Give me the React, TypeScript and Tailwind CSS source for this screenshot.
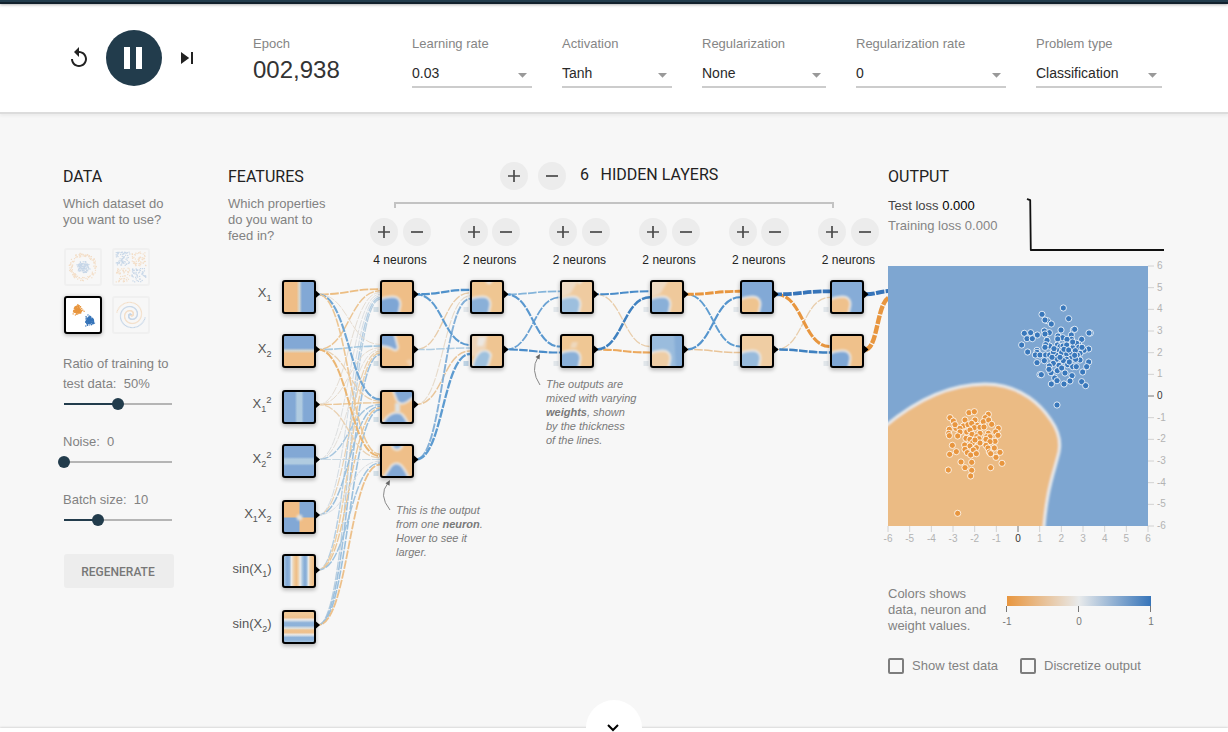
import React from "react";

const ORANGE = "#efbd86";
const BLUE = "#82a8d5";
const sans = "font-['Liberation_Sans',Arial,sans-serif]";

/* ---------- header ---------- */

const selects = [
  { label: "Learning rate", value: "0.03", cls: "w-[120px]" },
  { label: "Activation", value: "Tanh", cls: "w-[110px]" },
  { label: "Regularization", value: "None", cls: "w-[124px]" },
  { label: "Regularization rate", value: "0", cls: "w-[150px]" },
  { label: "Problem type", value: "Classification", cls: "w-[126px]" },
];

function Header() {
  return (
    <header className="relative z-10 h-[114px] border-b-2 border-[#dcdcdc] bg-white shadow-[0_2px_3px_rgba(0,0,0,0.05)]">
      <div className="h-1 border-b-2 border-[#12212d] bg-[#223c4c] shadow-[0_1px_3px_rgba(0,0,0,0.3)]" />
      <div className="flex pt-[25px]">
        <div className="ml-[67px] flex w-[186px] items-center pb-[2px]">
          <button className="flex size-6 items-center justify-center">
            <svg width="24" height="24" viewBox="0 0 24 24" fill="#222">
              <path d="M12 5V1L7 6l5 5V7c3.31 0 6 2.69 6 6s-2.69 6-6 6-6-2.69-6-6H4c0 4.42 3.58 8 8 8s8-3.58 8-8-3.58-8-8-8z" />
            </svg>
          </button>
          <button className="ml-[15px] flex size-14 items-center justify-center rounded-full bg-[#223c4c]">
            <svg width="36" height="36" viewBox="0 0 36 36" fill="#fff">
              <path d="M8 7h6v22H8zM20 7h6v22h-6z" />
            </svg>
          </button>
          <button className="ml-[14px] flex size-6 items-center justify-center">
            <svg width="24" height="24" viewBox="0 0 24 24" fill="#222">
              <path d="M5 6v12l8.2-6zM15 6v12h2V6z" />
            </svg>
          </button>
        </div>
        <div className="w-[159px]">
          <div className="mt-[6px] h-[18px] text-[13px] leading-[18px] text-[#858585]">Epoch</div>
          <div className="mt-[3px] text-[24px] leading-[28px] text-[#333]">002,938</div>
        </div>
        <div className="flex gap-[30px]">
          {selects.map((s) => (
            <div key={s.label} className={s.cls}>
              <div className="mt-[6px] h-[18px] whitespace-nowrap text-[13px] leading-[18px] text-[#858585]">{s.label}</div>
              <div className="mt-[8px] flex h-[27px] items-center justify-between border-b-2 border-[#ccc] pb-[1px] pr-[5px]">
                <span className="text-[14px] leading-[20px] text-[#2a2a2a]">{s.value}</span>
                <svg width="9" height="5" viewBox="0 0 9 5" className="mt-[4px]" fill="#999">
                  <path d="M0 0h9L4.5 4.8z" />
                </svg>
              </div>
            </div>
          ))}
        </div>
      </div>
    </header>
  );
}

/* ---------- data column ---------- */

function rng(seed: number) {
  let s = seed;
  return () => {
    s = (s * 16807) % 2147483647;
    return s / 2147483647;
  };
}

type Dot = [number, number, boolean];

function circleDots(): Dot[] {
  const r = rng(71);
  const out: Dot[] = [];
  for (let i = 0; i < 110; i++) {
    const a = r() * 6.283;
    const d = (r() + r()) * 3.8;
    out.push([17 + Math.cos(a) * d, 17 + Math.sin(a) * d, true]);
  }
  for (let i = 0; i < 120; i++) {
    const a = r() * 6.283;
    const d = 10.5 + r() * 3.6;
    out.push([17 + Math.cos(a) * d, 17 + Math.sin(a) * d, false]);
  }
  return out;
}

function xorDots(): Dot[] {
  const r = rng(913);
  const out: Dot[] = [];
  for (let i = 0; i < 270; i++) {
    const x = 2 + r() * 30;
    const y = 2 + r() * 30;
    if (Math.abs(x - 17) < 1 || Math.abs(y - 17) < 1) continue;
    out.push([x, y, x < 17 === y < 17]);
  }
  return out;
}

function gaussDots(): Dot[] {
  const r = rng(377);
  const out: Dot[] = [];
  for (let i = 0; i < 150; i++) {
    const a = r() * 6.283;
    const d = r() * 4.4 + (i % 10 === 0 ? 2.2 : 0);
    out.push([12 + Math.cos(a) * d, 12 + Math.sin(a) * d, false]);
    out.push([23.5 + Math.cos(a + 2) * d, 23 + Math.sin(a + 2) * d, true]);
  }
  return out;
}

function spiralDots(): Dot[] {
  const out: Dot[] = [];
  for (let i = 0; i < 100; i++) {
    const d = (i / 100) * 14.5;
    const a = (i / 100) * 10.9;
    out.push([17 + Math.sin(a) * d, 17 + Math.cos(a) * d, false]);
    out.push([17 - Math.sin(a) * d, 17 - Math.cos(a) * d, true]);
  }
  return out;
}

const datasets = [
  { id: "circle", dots: circleDots(), on: false },
  { id: "xor", dots: xorDots(), on: false },
  { id: "gauss", dots: gaussDots(), on: true },
  { id: "spiral", dots: spiralDots(), on: false },
];

function Slider({ track, knob }: { track: string; knob: string }) {
  return (
    <div className="relative ml-px flex h-3 w-[108px] items-center bg-transparent">
      <div className="h-[2px] w-full bg-[#b5b5b5]">
        <div className={`h-full bg-[#223c4c] ${track}`} />
      </div>
      <div className={`absolute top-0 size-3 rounded-full bg-[#223c4c] ${knob}`} />
    </div>
  );
}

function DataColumn() {
  return (
    <section className="w-[165px] pt-[53px]">
      <Title>DATA</Title>
      <p className="mt-[9px] text-[13px] leading-4 text-[#828282]">
        Which dataset do
        <br />
        you want to use?
      </p>
      <div className="ml-px mt-[20px] grid w-[86px] grid-cols-2 gap-[10px]">
        {datasets.map((d) => (
          <div
            key={d.id}
            className={
              d.on
                ? "size-[38px] rounded-[3px] border-2 border-black bg-white shadow-[0_1px_4px_rgba(0,0,0,0.3)]"
                : "size-[38px] rounded-[3px] border-2 border-[#f0f0f0]"
            }
          >
            <svg width="34" height="34" viewBox="0 0 34 34" opacity={d.on ? 1 : 0.25}>
              {d.dots.map(([x, y, b], i) => (
                <rect key={i} x={x - 0.6} y={y - 0.6} width="1.2" height="1.2" fill={b ? "#3674b9" : "#e8963f"} />
              ))}
            </svg>
          </div>
        ))}
      </div>
      <p className="mt-[20px] text-[13px] leading-5 text-[#828282]">
        Ratio of training to
        <br />
        test data:&nbsp; 50%
      </p>
      <div className="mt-[4px]">
        <Slider track="w-1/2" knob="left-[48px]" />
      </div>
      <p className="mt-[22px] text-[13px] leading-5 text-[#828282]">Noise:&nbsp; 0</p>
      <div className="mt-[4px]">
        <Slider track="w-0" knob="-left-[6px]" />
      </div>
      <p className="mt-[22px] text-[13px] leading-5 text-[#828282]">Batch size:&nbsp; 10</p>
      <div className="mt-[4px]">
        <Slider track="w-[34px]" knob="left-[28px]" />
      </div>
      <button className="ml-px mt-[28px] h-[34px] w-[110px] rounded-[3px] bg-[#ededed] pr-[2px] pt-[2px] font-['Roboto',sans-serif] text-[12px] font-medium text-[#777]">
        REGENERATE
      </button>
    </section>
  );
}

function Title({ children }: { children: React.ReactNode }) {
  return <h4 className="h-5 font-['Roboto',sans-serif] text-[16px] leading-5 text-[#222]">{children}</h4>;
}

/* ---------- network ---------- */

function RoundButton({ minus }: { minus?: boolean }) {
  return (
    <button className="flex size-7 items-center justify-center rounded-full bg-[#ececec]">
      <svg width="12" height="12" viewBox="0 0 12 12" stroke="#4a4a4a" strokeWidth="1.7">
        <path d={minus ? "M0 6h12" : "M0 6h12M6 0v12"} />
      </svg>
    </button>
  );
}

const layerCounts = [4, 2, 2, 2, 2, 2];
const rowY = [10, 64, 120, 174, 230, 284, 340];
const portY = [24.3, 79.5, 134.5, 189.5, 245, 300, 355];
const colX = [54, 152, 242, 332, 422, 512, 602];

type Link = [number, number, number, number, string];
// layer, source row, target row, stroke width, colour
const links: Link[] = [
  [0, 6, 0, 1.3, "#b9cfe0"], [0, 5, 0, 1.4, "#b4cee3"], [0, 4, 0, 1, "#d3dce4"], [0, 3, 0, 1, "#dddfe0"],
  [0, 2, 0, 1, "#e4ddd4"], [0, 1, 0, 1.5, "#ecc594"], [0, 0, 0, 1.8, "#ecbd82"],
  [0, 0, 1, 1, "#e7dccf"], [0, 1, 1, 1.6, "#a5c8e0"], [0, 2, 1, 1, "#e6dacb"], [0, 3, 1, 1, "#e3dfda"],
  [0, 4, 1, 1.2, "#ead2b3"], [0, 5, 1, 1.4, "#edcfa5"], [0, 6, 1, 1.6, "#9fc1de"],
  [0, 1, 2, 1.2, "#e9cfae"], [0, 2, 2, 1.4, "#ecc899"], [0, 3, 2, 1.4, "#a6c6df"], [0, 4, 2, 1.5, "#9bc0dd"],
  [0, 5, 2, 1.4, "#ecc899"], [0, 6, 2, 1.6, "#9bc0dd"], [0, 0, 2, 2.1, "#70a6d4"],
  [0, 2, 3, 1.3, "#ead2b3"], [0, 3, 3, 1.2, "#c8d8e3"], [0, 4, 3, 1, "#dcdfe2"], [0, 5, 3, 1.5, "#a0c3de"],
  [0, 6, 3, 1.8, "#edc08a"], [0, 0, 3, 1.6, "#edc795"], [0, 1, 3, 2, "#ebb673"],
  [1, 2, 0, 1.1, "#e7dbcb"], [1, 1, 0, 1.3, "#e8ccaa"], [1, 1, 1, 1.5, "#b0cde2"], [1, 2, 1, 1.5, "#e9c69b"],
  [1, 3, 0, 1.9, "#84b0d8"], [1, 3, 1, 2.3, "#5d9bd0"], [1, 0, 1, 2.1, "#5d9bd0"], [1, 0, 0, 2.3, "#4f91cb"],
  [2, 0, 0, 1.7, "#84b4da"], [2, 1, 0, 1.8, "#6ba2d3"], [2, 0, 1, 2.1, "#5a98cf"], [2, 1, 1, 2.2, "#4a8cc9"],
  [3, 0, 1, 1.3, "#e9ceac"], [3, 1, 1, 2.1, "#eca85c"], [3, 0, 0, 2.1, "#4a8cc9"], [3, 1, 0, 2.5, "#3f81c0"],
  [4, 1, 1, 1.5, "#e9c498"], [4, 0, 1, 1.9, "#5f9dd1"], [4, 1, 0, 2.1, "#5594cd"], [4, 0, 0, 2.9, "#e8963f"],
  [5, 1, 0, 1.3, "#e9ceac"], [5, 1, 1, 2.6, "#3f81c0"], [5, 0, 1, 3.1, "#e8963f"], [5, 0, 0, 3.7, "#3674b9"],
];

function linkPath([layer, from, to]: Link) {
  const n = layer === 0 ? 7 : layerCounts[layer - 1];
  const x1 = colX[layer] + 36;
  const x2 = colX[layer + 1];
  const y2 = portY[to] + ((from - (n - 1) / 2) / n) * 12;
  const m = (x1 + x2) / 2;
  return `M${x1} ${portY[from]}C${m} ${portY[from]} ${m} ${y2} ${x2} ${y2}`;
}

type Shape = { d: string; fill: string; halo?: boolean };
const BLOB = "M-4 18Q3 14.8 10 14.6C17 14.6 19.5 19 18 25L16 35H-4Z";

const hidden: { c: number; r: number; bg: string; shapes: Shape[] }[] = [
  { c: 1, r: 0, bg: "#efbe87", shapes: [{ d: BLOB, fill: "#7ea6d5", halo: true }] },
  { c: 1, r: 1, bg: "#efbf89", shapes: [{ d: "M-4 -4H12L16 11Q16 15 12 14Q6 10 -4 10Z", fill: BLUE, halo: true }, { d: "M24 25l4 -2 6 6 -4 5z", fill: "#f0cfab" }] },
  { c: 1, r: 2, bg: "#efbf89", shapes: [{ d: "M10 -4L15 9Q18 14 25 10L35 3V-4Z", fill: BLUE, halo: true }, { d: "M-2 34L5 25Q13 18 20 22Q24 26 28 35Z", fill: BLUE, halo: true }, { d: "M13 11h5v9h-5z", fill: "#dfe2e2" }] },
  { c: 1, r: 3, bg: "#efbf89", shapes: [{ d: "M9 -4Q10 4 15 4Q20 4 21 -4Z", fill: "#8fb2d8", halo: true }, { d: "M-1 35Q6 25 9 20Q14 15 19 19Q24 24 28 35Z", fill: BLUE, halo: true }] },
  { c: 2, r: 0, bg: "#efc692", shapes: [{ d: BLOB, fill: "#8ab0d8", halo: true }, { d: "M12 -4Q17 9 22 -4Z", fill: "#ece4da" }] },
  { c: 2, r: 1, bg: "#efc592", shapes: [{ d: "M-4 -4H16L14 12L4 20H-4Z", fill: "#eed5b9" }, { d: "M6 1h8l-3 9h-6z", fill: "#ece7e1" }, { d: "M0 35Q1 22 8 16Q16 12 19 19L17 27Q14 35 11 35Z", fill: "#9fc1de", halo: true }] },
  { c: 3, r: 0, bg: "#efcba0", shapes: [{ d: "M-4 -4H18L8 12L-4 16Z", fill: "#eedbc6" }, { d: BLOB, fill: "#9dbfde", halo: true }, { d: "M14 -4Q17 8 22 -4Z", fill: "#ece4da" }] },
  { c: 3, r: 1, bg: "#efc794", shapes: [{ d: BLOB, fill: "#8ab0d8", halo: true }, { d: "M10 6l6 0 -2 6 -6 0z", fill: "#eed8bd" }] },
  { c: 4, r: 0, bg: "#efc99b", shapes: [{ d: "M-4 -4H18L8 12L-4 16Z", fill: "#eedac3" }, { d: BLOB, fill: "#8ab0d8", halo: true }] },
  { c: 4, r: 1, bg: "#9abcdd", shapes: [{ d: "M22 -4H35V35H24Z", fill: "#86add7" }, { d: BLOB, fill: "#eecda5", halo: true }] },
  { c: 5, r: 0, bg: "#82a9d6", shapes: [{ d: BLOB, fill: "#efc48f", halo: true }] },
  { c: 5, r: 1, bg: "#efcda3", shapes: [{ d: BLOB, fill: "#98bbdc", halo: true }] },
  { c: 6, r: 0, bg: "#86acd7", shapes: [{ d: BLOB, fill: "#efc18c", halo: true }] },
  { c: 6, r: 1, bg: "#efc18b", shapes: [{ d: BLOB, fill: "#7fa7d5", halo: true }] },
];

function Frame({ x, y, children }: { x: number; y: number; children: React.ReactNode }) {
  return (
    <g transform={`translate(${x + 2} ${y + 2})`}>
      <rect x="-2" y="-1" width="34" height="35" rx="3" fill="#000" opacity="0.28" filter="url(#shade)" />
      <g clipPath="url(#cell)">{children}</g>
      <rect x="-1" y="-1" width="32" height="32" rx="2" fill="none" stroke="#000" strokeWidth="2" />
    </g>
  );
}

const band = (stops: [number, string][]) => stops.map(([o, c]) => <stop key={o} offset={o} stopColor={c} />);
const P = "#e8eaeb";
const X1_STOPS: [number, string][] = [[0, ORANGE], [0.42, ORANGE], [0.51, "#d8d8cf"], [0.6, BLUE], [1, BLUE]];
const SQ_STOPS: [number, string][] = [[0, BLUE], [0.36, BLUE], [0.44, "#b0cbe0"], [0.58, "#b0cbe0"], [0.66, BLUE], [1, BLUE]];
const SIN_STOPS: [number, string][] = [
  [0, "#a4c3de"], [0.1, BLUE], [0.18, "#8eb2d9"], [0.25, P], [0.33, "#efcfa5"], [0.41, ORANGE], [0.47, "#efcfa5"],
  [0.54, P], [0.63, "#9dbfde"], [0.7, BLUE], [0.76, "#9dbfde"], [0.81, P], [0.87, "#efcfa5"], [1, ORANGE],
];
const SIN_V: [number, string][] = [
  [0, "#efc896"], [0.08, "#efc896"], [0.18, "#efc08c"], [0.26, P], [0.36, "#8eb2d9"], [0.45, "#8eb2d9"], [0.54, "#dfe2e0"],
  [0.6, "#efc390"], [0.68, "#efc08c"], [0.76, P], [0.85, "#8eb2d9"], [0.92, "#8eb2d9"], [1, "#a4c3de"],
];

const featureFills = ["url(#gx)", "url(#gy)", "url(#gx2)", "url(#gy2)", "xy", "url(#sx)", "url(#sy)"];

function FeatureLabel({ i }: { i: number }) {
  const y = portY[i] + 3;
  const sub = (n: string) => (
    <tspan dy="4" fontSize="9">
      {n}
    </tspan>
  );
  const common = { x: 43.5, y, textAnchor: "end" as const, fontSize: 13, fill: "#555" };
  if (i < 2)
    return (
      <text {...common}>
        X{sub(String(i + 1))}
      </text>
    );
  if (i < 4)
    return (
      <text {...common}>
        X{sub(String(i - 1))}
        <tspan dy="-9" fontSize="9.5">2</tspan>
      </text>
    );
  if (i === 4)
    return (
      <text {...common}>
        X{sub("1")}
        <tspan dy="-4">X</tspan>
        {sub("2")}
      </text>
    );
  return (
    <text {...common}>
      sin(X{sub(String(i - 4))}
      <tspan dy="-4">)</tspan>
    </text>
  );
}

function Network() {
  return (
    <svg width="660" height="390" viewBox="0 0 660 390" className={`block ${sans}`}>
      <defs>
        <clipPath id="cell"><rect width="30" height="30" /></clipPath>
        <filter id="soft" x="-30%" y="-30%" width="160%" height="160%"><feGaussianBlur stdDeviation="1.2" /></filter>
        <filter id="shade" x="-30%" y="-30%" width="160%" height="160%"><feGaussianBlur stdDeviation="2" /></filter>
        <linearGradient id="gx">{band(X1_STOPS)}</linearGradient>
        <linearGradient id="gy" x1="0" x2="0" y1="1" y2="0">{band(X1_STOPS)}</linearGradient>
        <linearGradient id="gx2">{band(SQ_STOPS)}</linearGradient>
        <linearGradient id="gy2" x1="0" x2="0" y1="0" y2="1">{band(SQ_STOPS)}</linearGradient>
        <linearGradient id="sx">{band(SIN_STOPS)}</linearGradient>
        <linearGradient id="sy" x1="0" x2="0" y1="0" y2="1">{band(SIN_V)}</linearGradient>
      </defs>
      <g fill="none" strokeDasharray="8.7 1.3">
        {links.map((l, i) => (
          <path key={i} d={linkPath(l)} stroke={l[4]} strokeWidth={l[3]} strokeDashoffset={(i * 3) % 10} />
        ))}
        <path d="M638 24.3C650 24 650 21 664 21" stroke="#3674b9" strokeWidth="4" />
        <path d="M637 79.5C651 79.5 648 27.5 664 26.5" stroke="#e8963f" strokeWidth="4.4" />
      </g>
      {featureFills.map((f, i) => (
        <g key={i}>
          <FeatureLabel i={i} />
          <Frame x={colX[0]} y={rowY[i]}>
            {f === "xy" ? (
              <g>
                <rect width="30" height="30" fill={BLUE} />
                <path d="M0 0H15.5V15.5H0ZM15.5 15.5H30V30H15.5Z" fill={ORANGE} />
                <circle cx="15.5" cy="15.5" r="3" fill="#e4e2dc" filter="url(#soft)" />
              </g>
            ) : (
              <rect width="30" height="30" fill={f} />
            )}
          </Frame>
          <path d={`M88 ${portY[i] - 3.5}l4 3.5l-4 3.5z`} />
        </g>
      ))}
      {hidden.map((n) => (
        <g key={`${n.c}-${n.r}`}>
          <rect x={colX[n.c] - 6.5} y={rowY[n.r] + 27} width="5" height="5" fill={n.c === 2 && n.r === 1 ? "#bdd2e3" : n.c === 1 ? "#d2dee6" : "#e0e5e9"} />
          <Frame x={colX[n.c]} y={rowY[n.r]}>
            <rect width="30" height="30" fill={n.bg} />
            {n.shapes.map((s, i) => (
              <path key={i} d={s.d} fill={s.fill} stroke={s.halo ? "#e9e8e5" : "none"} strokeWidth="2" filter="url(#soft)" />
            ))}
          </Frame>
          <path d={`M${colX[n.c] + 34} ${portY[n.r] - 4}l4.5 4l-4.5 4z`} />
        </g>
      ))}
      <g fill="none" stroke="#888">
        <path d="M312 115Q302 100 310 87" />
        <path d="M162 240Q150 225 160 213" />
      </g>
      <path d="M312 84l-4.5 3 4 2.5zM162 210l-4.5 3.2 4 2.5z" fill="#666" />
    </svg>
  );
}

function NetworkArea() {
  return (
    <section className="w-[660px]">
      <div className="flex h-[156px]">
        <div className="w-[142px] shrink-0 pt-[53px]">
          <Title>FEATURES</Title>
          <p className="mt-[9px] text-[13px] leading-4 text-[#828282]">
            Which properties
            <br />
            do you want to
            <br />
            feed in?
          </p>
        </div>
        <div className="w-[518px] shrink-0 pt-[48px]">
          <div className="ml-[130px] flex h-7 items-center">
            <RoundButton />
            <div className="ml-[10px]"><RoundButton minus /></div>
            <div className="-mt-[3px] ml-[14px] flex font-['Roboto',sans-serif] text-[16px] leading-5 text-[#222]">
              <span className="w-[20.5px]">6</span>
              <span>HIDDEN LAYERS</span>
            </div>
          </div>
          <div className="ml-[24px] mt-[12px] h-[6px] w-[440px] border-2 border-b-0 border-[#c3c3c3]" />
          <div className="mt-[10px] flex">
            {layerCounts.map((n, i) => (
              <div key={i} className="w-[89.7px] shrink-0">
                <div className="flex w-[60.5px] justify-between">
                  <RoundButton />
                  <RoundButton minus />
                </div>
                <div className="mt-[6px] w-[60px] whitespace-nowrap text-center text-[12px] leading-4 text-[#222]">{n} neurons</div>
              </div>
            ))}
          </div>
        </div>
      </div>
      <div className="relative">
        <Network />
        <p className="absolute left-[318px] top-[107px] whitespace-nowrap text-[11px] italic leading-[14px] text-[#7a7a7a]">
          The outputs are<br />mixed with varying<br /><b>weights</b>, shown<br />by the thickness<br />of the lines.
        </p>
        <p className="absolute left-[168px] top-[233px] whitespace-nowrap text-[11px] italic leading-[14px] text-[#7a7a7a]">
          This is the output<br />from one <b>neuron</b>.<br />Hover to see it<br />larger.
        </p>
      </div>
    </section>
  );
}

/* ---------- output ---------- */

// Sample positions in thirds of a pixel, measured from the plot's inner origin.
const bluePts: [number, number][] = [
  [550, -96], [486, -77], [566, -64], [502, -58], [495, -60], [514, -48], [433, -20], [452, -22], [472, -15], [493, -27], [508, -22], [495, -18],
  [543, -30], [580, -30], [584, -32], [631, -21], [627, -21], [574, -15], [534, -12], [441, -4], [457, -4], [501, 1], [548, -7], [575, -2],
  [533, -3], [561, -2], [605, -2], [425, 15], [509, 18], [596, 13], [532, 15], [540, 20], [443, 36], [471, 31], [471, 37], [497, 14], [495, 22],
  [466, 45], [480, 45], [497, 45], [509, 45], [471, 68], [493, 62], [626, 27], [612, 31], [626, 66], [620, 80], [530, 30], [549, 18], [545, 38],
  [528, 45], [560, 42], [579, 22], [590, 10], [600, 40], [575, 40], [592, 45], [574, 54], [600, 60], [587, 58], [560, 58], [530, 58], [520, 70],
  [508, 78], [537, 76], [550, 62], [513, 98], [507, 88], [532, 92], [563, 74], [578, 80], [589, 80], [555, 99], [545, 84], [576, 107], [608, 96], [480, 104],
  [484, 104], [524, 114], [531, 122], [514, 132], [552, 132], [570, 123], [605, 125], [617, 137], [531, 195], [560, 15], [578, 6], [596, 22],
  [552, 28], [566, 30], [586, 32], [520, 36], [540, 52], [516, 52], [584, 46], [568, 66], [606, 22], [522, 26],
];
const orangePts: [number, number][] = [
  [267, 218], [283, 215], [325, 223], [210, 233], [220, 243], [228, 265], [225, 254], [255, 240], [285, 240], [316, 233], [310, 245], [326, 240],
  [250, 258], [264, 254], [292, 256], [275, 250], [335, 253], [208, 268], [206, 280], [208, 287], [240, 265], [240, 276], [233, 288], [260, 276],
  [283, 263], [300, 262], [312, 261], [355, 265], [347, 276], [354, 286], [270, 270], [276, 283], [258, 295], [270, 298], [300, 280], [290, 290],
  [297, 296], [325, 280], [320, 290], [330, 290], [318, 298], [345, 304], [330, 305], [278, 308], [300, 309], [285, 300], [254, 315], [217, 316],
  [270, 318], [318, 316], [289, 323], [255, 328], [280, 330], [324, 324], [343, 324], [229, 335], [209, 343], [262, 338], [272, 345], [289, 341],
  [328, 336], [332, 341], [360, 337], [348, 352], [243, 366], [275, 367], [366, 370], [255, 383], [332, 383], [205, 390], [275, 391], [272, 408],
  [233, 520],
];

const ticks = [-6, -5, -4, -3, -2, -1, 0, 1, 2, 3, 4, 5, 6];

function OutputPlot() {
  return (
    <svg width="290" height="290" viewBox="-10 -10 290 290" className={`-ml-[10px] -mt-[10px] block ${sans}`} fontSize="10">
      <defs>
        <clipPath id="plot"><rect width="260" height="260" /></clipPath>
        <filter id="edge"><feGaussianBlur stdDeviation="1.3" /></filter>
      </defs>
      <g clipPath="url(#plot)">
        <rect width="260" height="260" fill="#7ea6d1" />
        <path
          d="M-12 168C10 148 50 118 97 118C135 118 155 142 163 154C170 164 173 176 171 186C166 208 158 222 155 275H-12Z"
          fill="#ebbb84"
          stroke="#e8eaeb"
          strokeWidth="3"
          filter="url(#edge)"
        />
        <g transform="translate(-8 74) scale(.33333)" stroke="#fff" strokeOpacity=".8" strokeWidth="3">
          {bluePts.map(([x, y], i) => <circle key={i} cx={x} cy={y} r="9.3" fill="#3877bb" />)}
          {orangePts.map(([x, y], i) => <circle key={i} cx={x} cy={y} r="9.3" fill="#e8963f" />)}
        </g>
      </g>
      {ticks.map((t) => {
        const p = ((t + 6) * 260) / 12;
        const line = t === 0 ? "#777" : "#d2d2d2";
        const ink = t === 0 ? "#333" : "#b3b3b3";
        return (
          <g key={t}>
            <path d={`M${p} 260v6M260 ${260 - p}h6`} stroke={line} />
            <text x={p} y="276" textAnchor="middle" fill={ink}>{t}</text>
            <text x="269" y={263 - p} fill={ink}>{t}</text>
          </g>
        );
      })}
    </svg>
  );
}

function Check({ label }: { label: string }) {
  return (
    <label className="flex items-center gap-2 whitespace-nowrap">
      <span className="size-4 rounded-[2px] border-2 border-[#7d7d7d]" />
      {label}
    </label>
  );
}

function OutputColumn() {
  return (
    <section className="relative w-[290px] pt-[53px]">
      <Title>OUTPUT</Title>
      <div className="flex h-[79px]">
        <div className="w-[138px] pt-[9px] text-[13px] leading-5 text-[#858585]">
          <div className="text-[#444]">Test loss <span className="text-black">0.000</span></div>
          <div>Training loss 0.000</div>
        </div>
        <svg width="140" height="68" viewBox="0 0 140 68" fill="none" stroke="#111" strokeWidth="1.8" strokeLinejoin="round">
          <path d="M1.2 11.6L2 12.4L4.2 13.2L4.8 63H138" />
        </svg>
      </div>
      <OutputPlot />
      <div className="mt-[40px] flex">
        <p className="w-[113px] text-[13px] leading-4 text-[#828282]">
          Colors shows<br />data, neuron and<br />weight values.
        </p>
        <svg width="160" height="36" viewBox="-6 0 160 36" className={`mt-[10px] ${sans}`} fontSize="10" fill="#777" textAnchor="middle">
          <defs>
            <linearGradient id="legend">
              <stop offset="0" stopColor="#e8963f" />
              <stop offset=".5" stopColor="#e8eaeb" />
              <stop offset="1" stopColor="#3674b9" />
            </linearGradient>
          </defs>
          <rect width="144" height="10" fill="url(#legend)" />
          <path d="M-.5 10v6M71.5 10v6M143.5 10v6" stroke="#777" />
          <text x="0" y="29">-1</text>
          <text x="72" y="29">0</text>
          <text x="144" y="29">1</text>
        </svg>
      </div>
      <div className="mt-[22px] flex gap-[22px] text-[13px] leading-5 text-[#828282]">
        <Check label="Show test data" />
        <Check label="Discretize output" />
      </div>
    </section>
  );
}

export default function App() {
  return (
    <div className={`flex h-[732px] w-[1228px] flex-col overflow-hidden bg-[#f7f7f7] ${sans}`}>
      <Header />
      <main className="flex h-[614px] shrink-0 pl-[63px]">
        <DataColumn />
        <NetworkArea />
        <OutputColumn />
      </main>
      <footer className="relative h-1 bg-white shadow-[0_-1px_2px_rgba(0,0,0,0.12)]">
        <div className="absolute -top-7 left-[586px] flex size-14 items-center justify-center rounded-full bg-white">
          <svg width="12" height="8" viewBox="0 0 12 8" fill="none" stroke="#000" strokeWidth="2" className="mb-px mr-[2px]">
            <path d="M1 1l5 5 5-5" />
          </svg>
        </div>
      </footer>
    </div>
  );
}
